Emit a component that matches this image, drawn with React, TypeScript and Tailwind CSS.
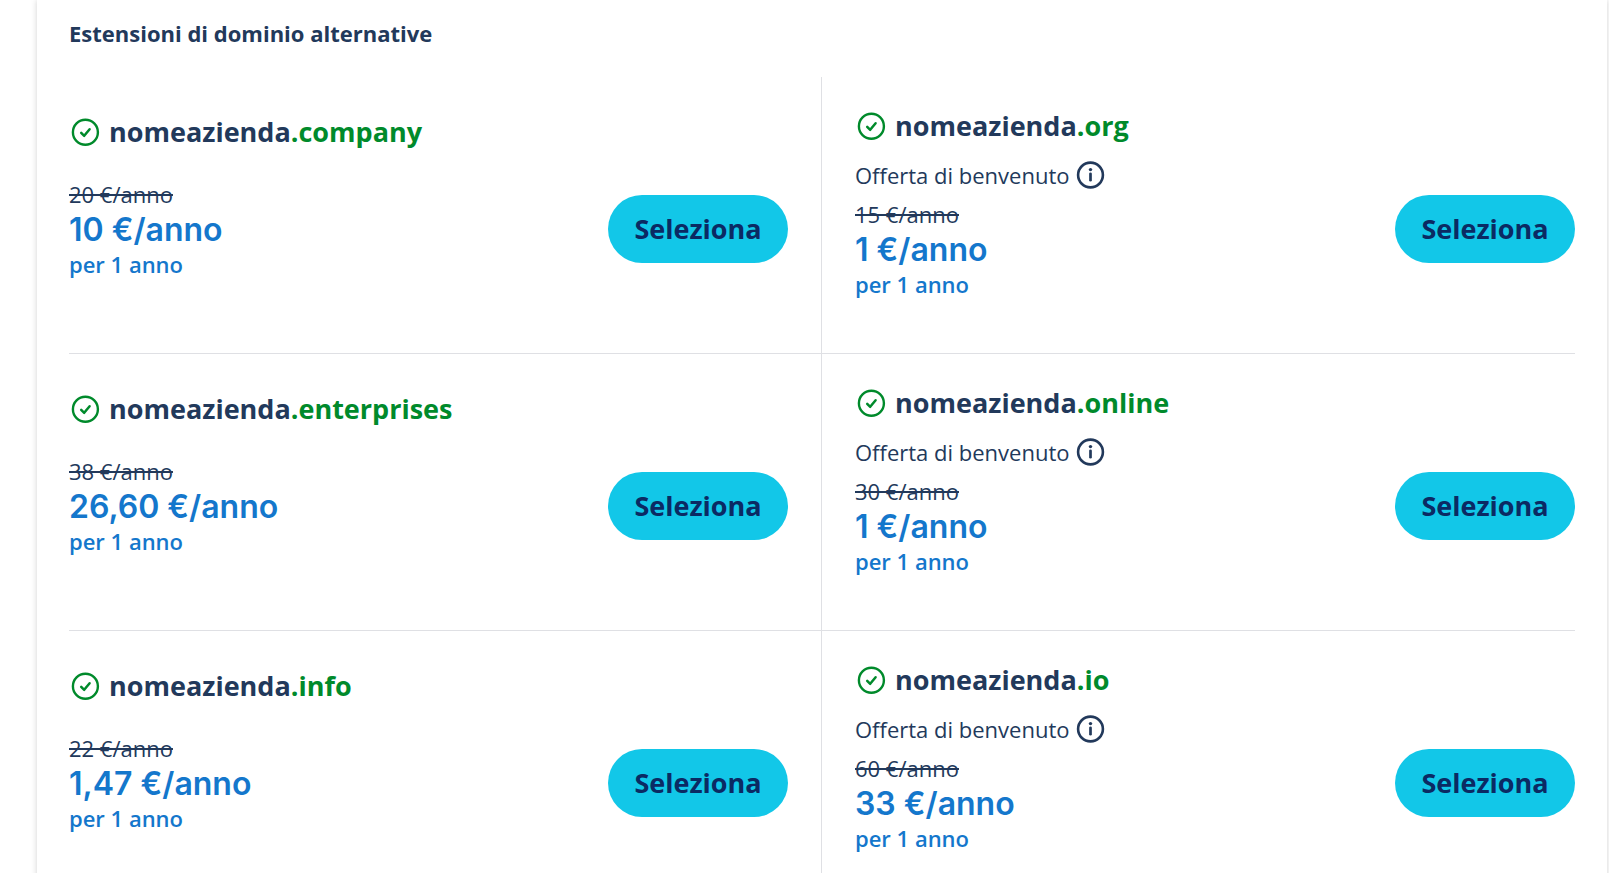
type Domain = {
  tld: string;
  oldPrice: string;
  price: string;
  welcome?: boolean;
};

const name = "nomeazienda";

const rows: [Domain, Domain][] = [
  [
    { tld: ".company", oldPrice: "20 €/anno", price: "10 €/anno" },
    { tld: ".org", oldPrice: "15 €/anno", price: "1 €/anno", welcome: true },
  ],
  [
    { tld: ".enterprises", oldPrice: "38 €/anno", price: "26,60 €/anno" },
    { tld: ".online", oldPrice: "30 €/anno", price: "1 €/anno", welcome: true },
  ],
  [
    { tld: ".info", oldPrice: "22 €/anno", price: "1,47 €/anno" },
    { tld: ".io", oldPrice: "60 €/anno", price: "33 €/anno", welcome: true },
  ],
];

function CheckIcon() {
  return (
    <svg
      className="size-8 shrink-0 text-[#008a2b]"
      viewBox="0 0 32 32"
      fill="none"
      stroke="currentColor"
      aria-hidden="true"
    >
      <circle cx="16.4" cy="16.2" r="12.5" strokeWidth="2.4" />
      <path
        d="M12.2 16.8l3 3 5.4-6.6"
        strokeWidth="2.5"
        strokeLinecap="round"
        strokeLinejoin="round"
      />
    </svg>
  );
}

function InfoIcon() {
  return (
    <svg
      className="size-8"
      viewBox="0 0 32 32"
      fill="none"
      stroke="currentColor"
      aria-hidden="true"
    >
      <circle cx="15.5" cy="16" r="12.4" strokeWidth="2.6" />
      <path d="M15.5 14.8v6.4" strokeWidth="2.7" strokeLinecap="round" />
      <circle cx="15.5" cy="10.6" r="1.7" fill="currentColor" stroke="none" />
    </svg>
  );
}

function DomainCell({ domain }: { domain: Domain }) {
  return (
    <article
      className={
        domain.welcome
          ? "flex min-h-[276px] flex-col justify-between pt-[30px] pb-[51px] pl-[33px]"
          : "flex min-h-[276px] flex-col justify-between border-r border-[#dfe0e4] pt-9 pr-[33px] pb-[51px]"
      }
    >
      <h3 className="flex items-center gap-2 text-[27px] leading-[38px] font-bold">
        <CheckIcon />
        <span>
          {name}
          <span className="text-[#008a2b]">{domain.tld}</span>
        </span>
      </h3>

      <div className="flex h-[146px] items-center justify-between">
        <div>
          {domain.welcome && (
            <p className="flex items-center gap-1.5 pb-1 text-[22px] leading-9">
              Offerta di benvenuto
              <button type="button" aria-label="Informazioni">
                <InfoIcon />
              </button>
            </p>
          )}

          <p className="text-[22px] leading-[35px]">
            <s>{domain.oldPrice}</s>
          </p>
          <p className="font-['Inter','Liberation_Sans',sans-serif] text-[32px] leading-[35px] font-semibold text-[#1477cc]">
            {domain.price}
          </p>
          <p className="text-[22px] leading-[35px] font-semibold text-[#1477cc]">
            per 1 anno
          </p>
        </div>

        <button
          type="button"
          className="h-[68px] w-[180px] rounded-full bg-[#12c7e8] text-[27px] font-bold text-[#0b2a63]"
        >
          Seleziona
        </button>
      </div>
    </article>
  );
}

export default function App() {
  return (
    <main className="min-h-screen overflow-hidden bg-white pr-[2px] pl-[37px] font-['Open_Sans','Noto_Sans',sans-serif] text-[#22395b]">
      <section className="min-h-screen bg-white px-8 pb-8 shadow-[0_0_6px_rgba(0,0,0,0.18)]">
        <h2 className="pt-4 pb-[27px] text-[22px] leading-[34px] font-bold">
          Estensioni di dominio alternative
        </h2>

        <div className="divide-y divide-[#dfe0e4]">
          {rows.map(([left, right]) => (
            <div key={left.tld} className="grid grid-cols-2">
              <DomainCell domain={left} />
              <DomainCell domain={right} />
            </div>
          ))}
        </div>
      </section>
    </main>
  );
}
